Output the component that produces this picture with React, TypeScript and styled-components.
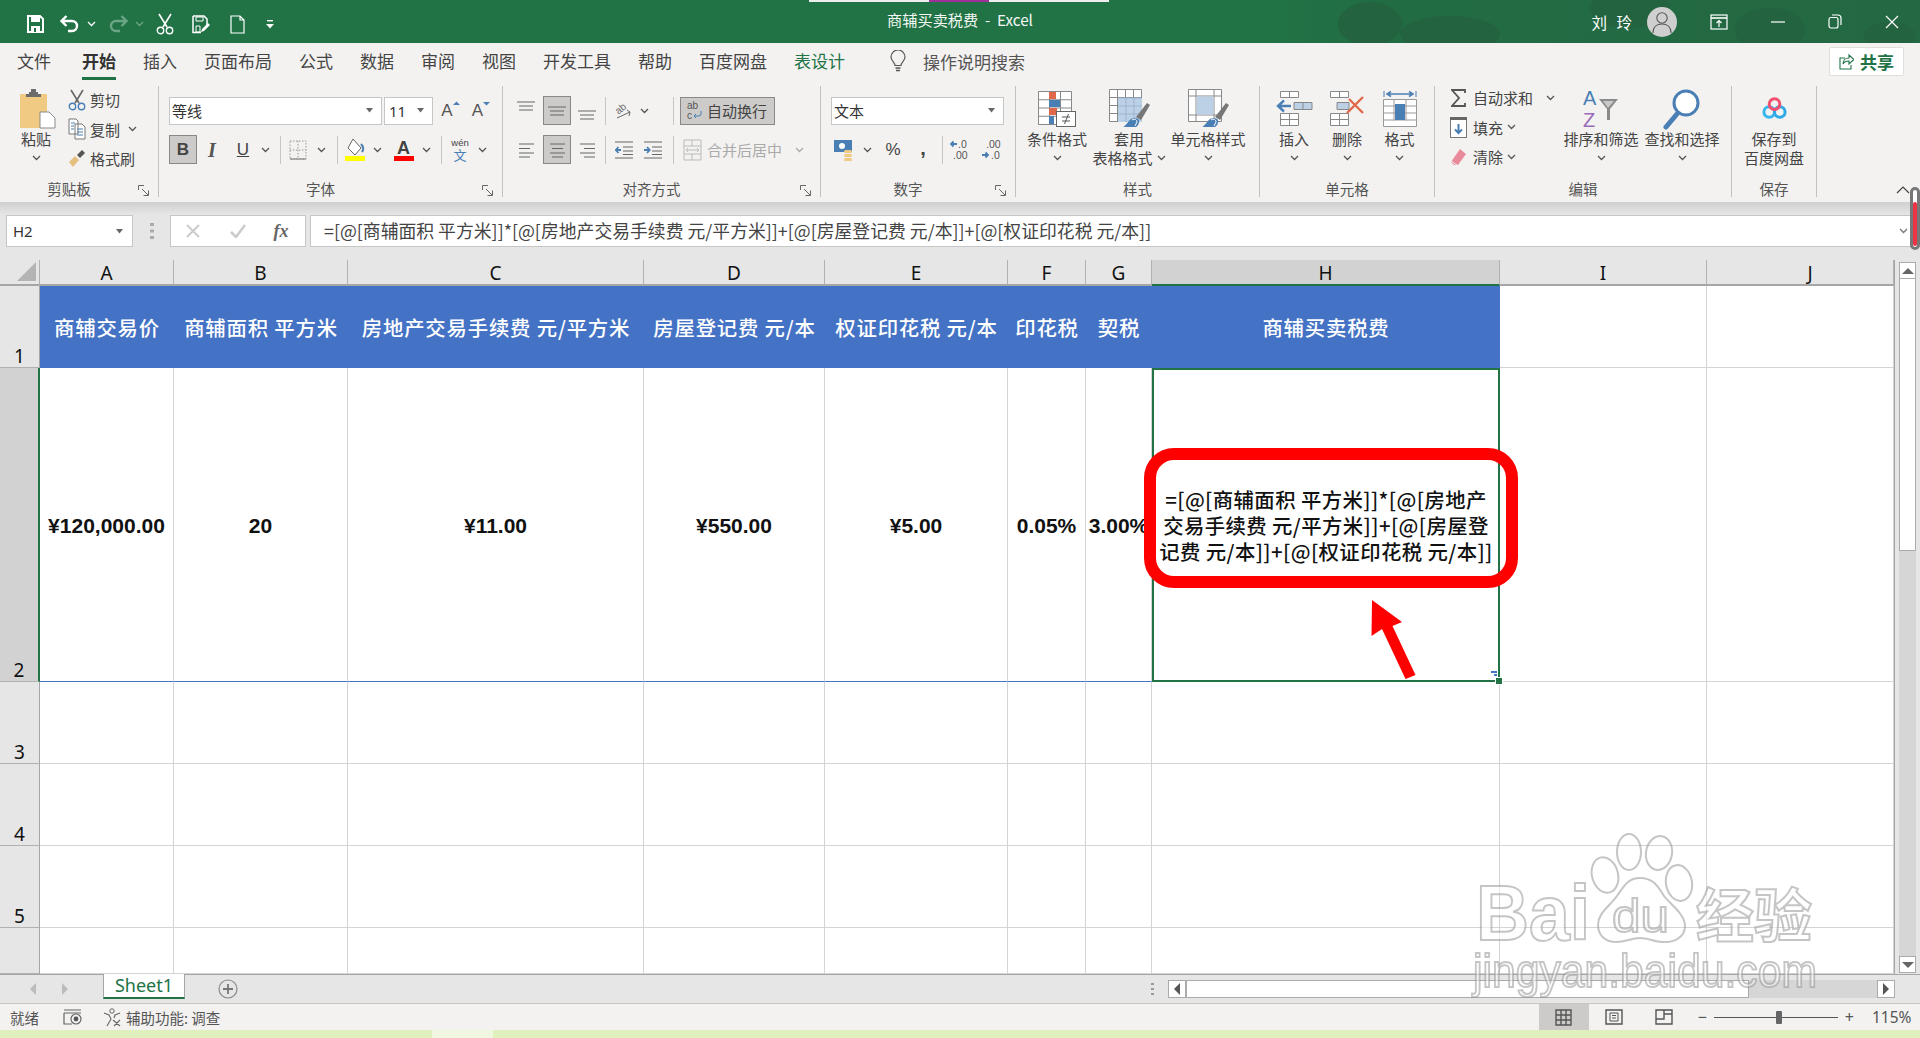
import React from 'react';
import styled, { createGlobalStyle } from 'styled-components';

const CJK = `'Noto Sans CJK SC', 'Noto Sans', sans-serif`;
const LATIN = `'Noto Sans', 'Noto Sans CJK SC', sans-serif`;

const GlobalStyle = createGlobalStyle`
    html, body {
        margin: 0;
        padding: 0;
        overflow: hidden;
        background: #e6e6e6;
    }
    * {
        box-sizing: border-box;
    }
    svg {
        display: block;
        flex: none;
    }
`;

const Page = styled.div`
    position: relative;
    width: 1920px;
    height: 1038px;
    overflow: hidden;
    display: flex;
    flex-direction: column;
    font-family: ${CJK};
    color: #444;
`;

/* ---------- title bar ---------- */

const TitleBar = styled.header`
    position: relative;
    flex: 0 0 43px;
    display: grid;
    grid-template-columns: 1fr auto 1fr;
    align-items: center;
    color: #fff;
    background: linear-gradient(90deg, #217346 0, #217346 66%, #226c44 72%, #236842 100%);
`;

const TopStripe = styled.div`
    position: absolute;
    top: 0;
    left: 809px;
    width: 300px;
    height: 2px;
    background: linear-gradient(90deg, #eee 0, #eee 40%, #a0309a 40%, #a0309a 60%, #eee 60%);
`;

const Leaves = styled.svg`
    position: absolute;
    top: 0;
    right: 0;
`;

const Qat = styled.div`
    position: relative;
    display: flex;
    align-items: center;
    padding: 5px 0 0 23px;
`;

const TitleText = styled.div`
    position: relative;
    font-size: 15.2px;
    line-height: 20px;
    margin-top: -6px;
    color: #f4f8f5;
    white-space: pre;
`;

const TitleRight = styled.div`
    position: relative;
    display: flex;
    align-items: center;
    justify-content: flex-end;
`;

const UserName = styled.span`
    font-size: 15.5px;
    letter-spacing: 3px;
    margin-right: 12px;
`;

const Avatar = styled.div`
    width: 30px;
    height: 30px;
    border-radius: 50%;
    background: #cfcfcf;
    display: flex;
    align-items: center;
    justify-content: center;
    margin-right: 34px;
`;

/* generic sized slot inside a toolbar row */
const Cell = styled.div<{ $w: number }>`
    flex: 0 0 ${(p) => p.$w}px;
    width: ${(p) => p.$w}px;
    min-width: 0;
    display: flex;
    align-items: center;
    justify-content: center;
`;

const WinBtn = styled(Cell)`
    height: 30px;
`;

/* ---------- ribbon ---------- */

const Ribbon = styled.section`
    flex: 0 0 159px;
    display: flex;
    flex-direction: column;
    background: #f3f2f1;
    position: relative;
`;

const TabRow = styled.nav`
    flex: 0 0 37px;
    display: flex;
    align-items: flex-start;
    gap: 27px;
    padding: 3px 0 0 17px;
`;

const Tab = styled.div<{ $active?: boolean; $green?: boolean }>`
    position: relative;
    height: 34px;
    font-size: 17px;
    line-height: 30px;
    font-weight: ${(p) => (p.$active ? 700 : 400)};
    color: ${(p) => (p.$active ? '#333' : p.$green ? '#217346' : '#444')};
    border-bottom: ${(p) => (p.$active ? '3px solid #217346' : '3px solid transparent')};
    margin-left: ${(p) => (p.$active ? '4px' : '0')};
`;

const Search = styled.div`
    display: flex;
    align-items: center;
    gap: 17px;
    height: 30px;
    margin-left: 18px;
    font-size: 17px;
    color: #555;
`;

const ShareBtn = styled.div`
    margin-left: auto;
    margin-right: 16px;
    margin-top: 1px;
    width: 75px;
    height: 29px;
    display: flex;
    align-items: center;
    justify-content: center;
    gap: 6px;
    background: #fff;
    border: 1px solid #e1dfdd;
    border-radius: 2px;
    color: #217346;
    font-size: 17px;
    font-weight: 700;
`;

const Groups = styled.div`
    display: flex;
    height: 111px;
    margin-top: 6px;
`;

const Group = styled.div<{ $w: number }>`
    flex: 0 0 ${(p) => p.$w}px;
    min-width: 0;
    display: flex;
    flex-direction: column;
    border-right: 1px solid #c4c2c0;
`;

const GroupBody = styled.div<{ $pad?: number }>`
    flex: 0 0 98px;
    display: flex;
    padding-left: ${(p) => p.$pad ?? 0}px;
`;

const Stack = styled.div`
    display: flex;
    flex-direction: column;
`;

const EditStack = styled(Stack)`
    margin-top: -3px;
`;

const ClipStack = styled(Stack)`
    margin-top: -1px;
`;

const ComboStack = styled(Stack)`
    padding-top: 10px;
    gap: 10px;
`;

const GroupFoot = styled.div`
    flex: 1;
    display: flex;
    align-items: center;
    font-size: 14.5px;
    line-height: 14px;
    color: #555;
`;

const FootLabel = styled.span`
    flex: 1;
    text-align: center;
    margin-top: -3px;
`;

const Launcher = styled.div`
    flex: 0 0 20px;
`;

const Collapse = styled.div`
    margin-left: auto;
    margin-right: 10px;
    align-self: flex-end;
    margin-bottom: 3px;
`;

const Row = styled.div`
    display: flex;
    align-items: center;
    height: 29px;
`;

const Combo = styled.div<{ $w: number }>`
    flex: 0 0 ${(p) => p.$w}px;
    height: 28px;
    display: flex;
    align-items: center;
    justify-content: space-between;
    padding: 0 7px 0 2px;
    background: #fff;
    border: 1px solid #c6c6c6;
    font-size: 15px;
    color: #333;
`;

const SizeValue = styled.span`
    padding-left: 2px;
    font-family: ${LATIN};
`;

const Toggle = styled.div<{ $w: number }>`
    flex: 0 0 ${(p) => p.$w}px;
    height: 29px;
    display: flex;
    align-items: center;
    justify-content: center;
    background: #cdcbc9;
    border: 1px solid #8a8886;
`;

const VSep = styled.div`
    flex: 0 0 1px;
    height: 28px;
    background: #c8c6c4;
`;

const Gap = styled.div<{ $w: number }>`
    flex: 0 0 ${(p) => p.$w}px;
`;

const FontMark = styled.span<{ $b?: boolean; $u?: boolean }>`
    font-family: 'Liberation Sans', sans-serif;
    font-size: 17px;
    line-height: 20px;
    color: #444;
    font-weight: ${(p) => (p.$b ? 700 : 400)};
    text-decoration: ${(p) => (p.$u ? 'underline' : 'none')};
`;

const ItalicMark = styled.span`
    font-family: 'Liberation Serif', serif;
    font-style: italic;
    font-weight: 700;
    font-size: 20px;
    line-height: 20px;
    color: #555;
`;

const CommaMark = styled.span`
    font-family: 'Liberation Sans', sans-serif;
    font-weight: 700;
    font-size: 20px;
    line-height: 12px;
    height: 16px;
    color: #444;
`;

const GrowWrap = styled.div`
    display: flex;
    align-items: flex-start;
`;

const GrowLetter = styled.span`
    font-family: 'Liberation Sans', sans-serif;
    font-size: 17px;
    line-height: 20px;
    color: #555;
`;

const WenWrap = styled.div`
    display: flex;
    flex-direction: column;
    align-items: center;
`;

const WenSmall = styled.span`
    font-family: 'Liberation Sans', sans-serif;
    font-size: 9.5px;
    line-height: 10px;
    color: #444;
`;

const WenBig = styled.span`
    font-size: 13px;
    line-height: 14px;
    color: #4a7fb5;
`;

const WrapBtn = styled.div`
    flex: 0 0 95px;
    height: 28px;
    display: flex;
    align-items: center;
    gap: 4px;
    padding-left: 5px;
    background: #cdcbc9;
    border: 1px solid #8a8886;
    font-size: 15px;
    color: #444;
    white-space: nowrap;
`;

const MergeBtn = styled.div`
    flex: 0 0 110px;
    height: 29px;
    display: flex;
    align-items: center;
    gap: 5px;
    padding-left: 3px;
    font-size: 15px;
    color: #aaa;
    white-space: nowrap;
`;

const Big = styled.div<{ $w: number }>`
    flex: 0 0 ${(p) => p.$w}px;
    min-width: 0;
    display: flex;
    flex-direction: column;
    align-items: center;
    font-size: 15px;
    line-height: 19px;
    color: #444;
    white-space: nowrap;
`;

const BigIcon = styled.div`
    height: 43px;
    padding-top: 2px;
    display: flex;
    align-items: center;
    justify-content: center;
`;

const ChevLine = styled.div`
    height: 19px;
    display: flex;
    align-items: center;
    justify-content: center;
    gap: 4px;
`;

const SmallRow = styled.div`
    height: 29.5px;
    display: flex;
    align-items: center;
    font-size: 15px;
    color: #444;
    white-space: nowrap;
`;

const SmallIcon = styled.div<{ $w: number; $pl?: number }>`
    flex: 0 0 ${(p) => p.$w}px;
    display: flex;
    justify-content: center;
    padding-left: ${(p) => p.$pl ?? 0}px;
`;

const SmallChev = styled.div<{ $ml: number }>`
    margin-left: ${(p) => p.$ml}px;
`;

/* ---------- formula bar ---------- */

const FormulaBar = styled.div`
    flex: 0 0 58px;
    display: flex;
    align-items: flex-start;
    padding: 13px 0 0 6px;
    background: linear-gradient(#cfcfcf 0, #e6e6e6 13px);
`;

const NameBox = styled.div`
    flex: 0 0 127px;
    height: 32px;
    display: flex;
    align-items: center;
    justify-content: space-between;
    padding: 0 8px 0 6px;
    background: #fff;
    border: 1px solid #c6c6c6;
    font-family: ${LATIN};
    font-size: 15px;
    color: #333;
`;

const Grip = styled.div`
    flex: 0 0 37px;
    height: 32px;
    display: flex;
    justify-content: center;
    align-items: center;
`;

const FxBox = styled.div`
    flex: 0 0 136px;
    height: 32px;
    display: flex;
    align-items: center;
    background: #fff;
    border: 1px solid #c6c6c6;
    margin-right: 4px;
`;

const Fx = styled.span`
    font-family: 'Liberation Serif', serif;
    font-style: italic;
    font-weight: 700;
    font-size: 18px;
    color: #666;
`;

const FormulaInput = styled.div`
    flex: 1;
    height: 32px;
    display: flex;
    align-items: center;
    justify-content: space-between;
    padding: 0 12px 0 13px;
    background: #fff;
    border: 1px solid #c6c6c6;
    border-right: 0;
    font-size: 17.84px;
    line-height: 26px;
    color: #444;
    white-space: pre;
`;

const FormulaText = styled.span`
    margin-top: -2px;
`;

/* ---------- sheet ---------- */

const SheetArea = styled.main`
    flex: 0 0 714px;
    display: flex;
    background: #e6e6e6;
`;

const Grid = styled.div`
    flex: 0 0 1894px;
    display: grid;
    grid-template-columns: 40px 134px 174px 296px 181px 183px 78px 66px 348px 207px 187px;
    grid-template-rows: 26px 82px 314px 82px 82px 82px 46px;
    background: #fff;
    border-right: 1px solid #a6a6a6;
    position: relative;
`;

const Corner = styled.div`
    background: #e6e6e6;
    border-right: 1px solid #b1b1b1;
    border-bottom: 2px solid #a6a6a6;
    display: flex;
    align-items: flex-end;
    justify-content: flex-end;
    padding: 0 3px 3px 0;
`;

const ColHead = styled.div<{ $on?: boolean; $shift?: number }>`
    display: flex;
    align-items: center;
    justify-content: center;
    padding-left: ${(p) => p.$shift ?? 0}px;
    padding-top: 2px;
    background: ${(p) => (p.$on ? '#d2d2d2' : '#e6e6e6')};
    border-right: 1px solid #b1b1b1;
    border-bottom: 2px solid ${(p) => (p.$on ? '#217346' : '#a6a6a6')};
    font-family: ${LATIN};
    font-size: 19px;
    line-height: 22px;
    color: #111;
`;

const RowHead = styled.div<{ $on?: boolean }>`
    display: flex;
    align-items: flex-end;
    justify-content: center;
    background: ${(p) => (p.$on ? '#d2d2d2' : '#e6e6e6')};
    border-right: ${(p) => (p.$on ? '2px solid #217346' : '1px solid #a6a6a6')};
    border-bottom: 1px solid #b1b1b1;
    font-family: ${LATIN};
    font-size: 19px;
    line-height: 22.5px;
    color: #111;
`;

const HeadCell = styled.div`
    display: flex;
    align-items: center;
    justify-content: center;
    background: #4472c4;
    color: #fff;
    font-size: 20.4px;
    line-height: 26px;
    font-weight: 500;
    white-space: nowrap;
    letter-spacing: 0.8px;
`;

const DataCell = styled.div`
    display: flex;
    align-items: center;
    justify-content: center;
    padding-top: 2px;
    border-right: 1px solid #d4d4d4;
    border-bottom: 1px solid #4472c4;
    font-family: 'Liberation Sans', sans-serif;
    font-size: 21px;
    font-weight: 700;
    color: #111;
    white-space: nowrap;
    overflow: hidden;
`;

const SelectedCell = styled.div`
    position: relative;
    display: flex;
    flex-direction: column;
    align-items: center;
    justify-content: center;
    border: 2px solid #217346;
    font-size: 20.4px;
    letter-spacing: 0.4px;
    line-height: 26px;
    font-weight: 500;
    color: #111;
    white-space: nowrap;
`;

const FillHandle = styled.div`
    position: absolute;
    right: -4px;
    bottom: -4px;
    width: 6px;
    height: 6px;
    background: #217346;
    outline: 1px solid #fff;
`;

const Blank = styled.div`
    border-right: 1px solid #d4d4d4;
    border-bottom: 1px solid #d4d4d4;
`;

const VScroll = styled.div`
    flex: 1;
    display: flex;
    flex-direction: column;
    padding: 2px 4px 1px 4px;
`;

const ScrollBtn = styled.div`
    flex: 0 0 17px;
    display: flex;
    align-items: center;
    justify-content: center;
    background: #fff;
    border: 1px solid #ababab;
`;

const VThumb = styled.div`
    flex: 0 0 272px;
    background: #fff;
    border: 1px solid #ababab;
    border-top: 0;
`;

const VLane = styled.div`
    flex: 1;
    background: #d6d6d6;
`;

/* ---------- sheet tabs ---------- */

const TabBar = styled.div`
    flex: 0 0 29px;
    display: flex;
    align-items: flex-start;
    background: #e6e6e6;
    border-top: 1px solid #a6a6a6;
`;

const NavArrows = styled.div`
    flex: 0 0 103px;
    height: 28px;
    display: flex;
    align-items: center;
    padding-left: 27px;
    gap: 20px;
`;

const SheetTab = styled.div`
    flex: 0 0 82px;
    height: 25px;
    margin-top: -1px;
    background: #fff;
    border-left: 1px solid #a6a6a6;
    border-right: 1px solid #a6a6a6;
    border-bottom: 2px solid #217346;
    color: #217346;
    font-family: ${LATIN};
    font-size: 18px;
    line-height: 22px;
    text-align: center;
`;

const AddSheet = styled.div`
    margin: 4px 0 0 33px;
    width: 20px;
    height: 20px;
`;

const HScroll = styled.div`
    margin-left: auto;
    display: flex;
    align-items: center;
    height: 28px;
    padding-right: 25px;
`;

const Dots = styled.div`
    flex: 0 0 17px;
`;

const HBtn = styled.div`
    flex: 0 0 18px;
    height: 18px;
    display: flex;
    align-items: center;
    justify-content: center;
    background: #fff;
    border: 1px solid #ababab;
`;

const HThumb = styled.div`
    flex: 0 0 563px;
    height: 18px;
    background: #fff;
    border: 1px solid #ababab;
`;

const HLane = styled.div`
    flex: 0 0 128px;
    height: 18px;
    background: #d6d6d6;
`;

/* ---------- status bar ---------- */

const StatusBar = styled.footer`
    flex: 0 0 27px;
    display: flex;
    align-items: center;
    padding-left: 10px;
    background: #f3f2f1;
    border-top: 1px solid #c8c6c4;
    font-size: 14.5px;
    color: #555;
    white-space: nowrap;
`;

const StatusText = styled.span`
    margin-right: 4px;
`;

const StatusRight = styled.div`
    margin-left: auto;
    display: flex;
    align-items: center;
    height: 100%;
`;

const ViewBtn = styled.div<{ $on?: boolean }>`
    flex: 0 0 50px;
    height: 100%;
    display: flex;
    align-items: center;
    justify-content: center;
    background: ${(p) => (p.$on ? '#cdcbc9' : 'transparent')};
`;

const ZoomTrack = styled.div`
    position: relative;
    flex: 0 0 124px;
    height: 1px;
    margin: 0 7px;
    background: #555;
`;

const ZoomThumb = styled.div`
    position: absolute;
    left: 62px;
    top: -6px;
    width: 6px;
    height: 13px;
    background: #666;
    border-radius: 1px;
`;

const ZoomValue = styled.span`
    flex: 0 0 49px;
    padding-left: 1px;
    font-family: ${LATIN};
    font-size: 15.5px;
    color: #555;
`;

const PlusMinus = styled.span`
    font-family: ${LATIN};
    font-size: 16px;
    line-height: 16px;
    color: #555;
`;

const GreenStrip = styled.div`
    flex: 1;
    display: flex;
    background: #dff0bd;
`;

const StripPatch = styled.div`
    flex: 0 0 61px;
    margin-left: 432px;
    background: #eff7e0;
`;

/* ---------- things lying over the page ---------- */

const RedFrame = styled.div`
    position: absolute;
    left: 1144px;
    top: 448px;
    width: 374px;
    height: 140px;
    border: 12px solid #ff0000;
    border-radius: 30px;
`;

const Overlay = styled.svg`
    position: absolute;
    left: 0;
    top: 0;
    pointer-events: none;
`;

const Thermo = styled.div`
    position: absolute;
    left: 1910px;
    top: 187px;
    width: 10px;
    height: 63px;
    border: 3px solid #777;
    border-radius: 6px;
    background: #fff;
    display: flex;
    align-items: flex-end;
    justify-content: center;
    padding-bottom: 1px;
`;

const ThermoFill = styled.div`
    width: 4px;
    height: 44px;
    background: #ee3344;
    border-radius: 2px;
`;

/* ---------- icons ---------- */

const Chev = ({ c = '#555' }: { c?: string }) => (
    <svg width="9" height="6" viewBox="0 0 9 6">
        <path d="M1 1l3.5 3.5L8 1" fill="none" stroke={c} strokeWidth="1.3" />
    </svg>
);

const ChevUp = () => (
    <svg width="14" height="9" viewBox="0 0 14 9">
        <path d="M1 8l6-6 6 6" fill="none" stroke="#444" strokeWidth="1.2" />
    </svg>
);

const Drop = () => (
    <svg width="9" height="5" viewBox="0 0 9 5">
        <path d="M1 0h7L4.5 4.5z" fill="#666" />
    </svg>
);

const QSave = () => (
    <svg width="17" height="18" viewBox="0 0 17 18">
        <path d="M1 1h12l3 3v13H1z" fill="none" stroke="#fff" strokeWidth="2" />
        <rect x="4" y="2" width="9" height="5" fill="#fff" />
        <rect x="4" y="11" width="9" height="6" fill="#fff" />
        <rect x="7" y="13" width="2" height="4" fill="#217346" />
    </svg>
);

const QUndo = ({ c = '#fff' }: { c?: string }) => (
    <svg width="19" height="18" viewBox="0 0 19 18">
        <path d="M2 6h10a4.5 4.5 0 0 1 0 10H8M6.5 1L1.5 6l5 5" fill="none" stroke={c} strokeWidth="2.4" />
    </svg>
);

const QRedo = ({ c = '#6aa585' }: { c?: string }) => (
    <svg width="19" height="18" viewBox="0 0 19 18">
        <path d="M17 6H7a4.5 4.5 0 0 0 0 10h4M12.5 1l5 5-5 5" fill="none" stroke={c} strokeWidth="2.4" />
    </svg>
);

const Scissors = ({ c = '#fff', h = '#fff' }: { c?: string; h?: string }) => (
    <svg width="18" height="22" viewBox="0 0 18 22">
        <path d="M3 1l8 13M15 1L7 14" fill="none" stroke={c} strokeWidth="1.6" />
        <circle cx="4.5" cy="17.5" r="3.2" fill="none" stroke={h} strokeWidth="1.4" />
        <circle cx="13.5" cy="17.5" r="3.2" fill="none" stroke={h} strokeWidth="1.4" />
    </svg>
);

const QSaveEdit = () => (
    <svg width="18" height="19" viewBox="0 0 18 19">
        <path d="M1 1h11l3 3v6M9 17.5H1V1" fill="none" stroke="#fff" strokeWidth="1.5" />
        <path d="M4 2h7v4H4zM4 11h4v6H4z" fill="none" stroke="#fff" />
        <path d="M9 17l1-3 6-6 2 2-6 6z" fill="#fff" />
    </svg>
);

const QDoc = () => (
    <svg width="15" height="19" viewBox="0 0 15 19">
        <path d="M1 1h9l4 4v13H1z M10 1v4h4" fill="none" stroke="#fff" strokeWidth="1.2" />
    </svg>
);

const QCustom = () => (
    <svg width="8" height="9" viewBox="0 0 8 9">
        <rect x="1" y="0" width="6" height="1.4" fill="#fff" />
        <path d="M0 4h8L4 8.5z" fill="#fff" />
    </svg>
);

const Person = () => (
    <svg width="22" height="24" viewBox="0 0 22 24">
        <circle cx="11" cy="8" r="5.2" fill="none" stroke="#555" strokeWidth="1.1" />
        <path d="M2 23c0-6 4-9 9-9s9 3 9 9" fill="none" stroke="#555" strokeWidth="1.1" />
    </svg>
);

const RibbonDisplay = () => (
    <svg width="18" height="16" viewBox="0 0 18 16">
        <rect x="1" y="1" width="16" height="14" fill="none" stroke="#fff" strokeWidth="1.2" />
        <path d="M1 4h16" stroke="#fff" strokeWidth="1.6" />
        <path d="M9 13V7M6.5 9L9 6.5 11.5 9" fill="none" stroke="#fff" strokeWidth="1.2" />
    </svg>
);

const WinMin = () => (
    <svg width="14" height="2" viewBox="0 0 14 2">
        <path d="M0 1h14" stroke="#fff" strokeWidth="1.2" />
    </svg>
);

const WinRestore = () => (
    <svg width="14" height="15" viewBox="0 0 14 15">
        <rect x="1" y="3.5" width="9" height="10.5" rx="2" fill="none" stroke="#fff" strokeWidth="1.2" />
        <path d="M4 1h6a3 3 0 0 1 3 3v7" fill="none" stroke="#fff" strokeWidth="1.2" />
    </svg>
);

const WinClose = () => (
    <svg width="14" height="14" viewBox="0 0 14 14">
        <path d="M1 1l12 12M13 1L1 13" stroke="#fff" strokeWidth="1.2" />
    </svg>
);

const Bulb = () => (
    <svg width="16" height="23" viewBox="0 0 16 23">
        <path d="M5 15.5c0-3-4-4.5-4-8.5a7 7 0 0 1 14 0c0 4-4 5.5-4 8.5z" fill="none" stroke="#555" strokeWidth="1.2" />
        <path d="M5.5 18h5M6 20.5h4" stroke="#555" strokeWidth="1.6" />
    </svg>
);

const ShareIcon = () => (
    <svg width="15" height="17" viewBox="0 0 15 17">
        <path d="M6 5H1v11h11v-4" fill="none" stroke="#217346" strokeWidth="1.1" />
        <path d="M4 11c0-4 3-6 6-6V2l5 4.5L10 11V8c-3 0-5 1-6 3z" fill="none" stroke="#217346" strokeWidth="1.1" />
    </svg>
);

const Paste = () => (
    <svg width="40" height="40" viewBox="-4 0 40 40">
        <rect x="0" y="5" width="27" height="34" rx="1" fill="#f0c983" />
        <path d="M9 5V3h2V0h5v3h2v2h3v3H6V5z" fill="#6b6b6b" />
        <path d="M20 23h9l6 6v10H20z" fill="#fff" stroke="#8a8a8a" />
    </svg>
);

const Copy = () => (
    <svg width="18" height="22" viewBox="0 0 18 22">
        <path d="M1 1h7l2 2v13H1zM7 6h7l3 3v12H7z" fill="#fff" stroke="#777" />
        <path d="M3 5h4M3 8h3M3 11h3M9 11h6M9 14h6M9 17h6" stroke="#4a7fb5" />
    </svg>
);

const Painter = () => (
    <svg width="18" height="19" viewBox="0 0 18 19">
        <path d="M1 13l6-6 4 4-6 7z" fill="#e5bf80" />
        <path d="M9 6l5-5 3 3-5 5z" fill="#555" />
    </svg>
);

const Launch = () => (
    <svg width="11" height="11" viewBox="0 0 11 11">
        <path d="M.5 5V.5H6M4 4l6 6M10.5 5.5v5h-5" fill="none" stroke="#666" />
    </svg>
);

const GrowA = ({ up }: { up?: boolean }) => (
    <GrowWrap>
        <GrowLetter>A</GrowLetter>
        <svg width="7" height="5" viewBox="0 0 7 5">
            <path d={up ? 'M0 4l3.5-3.5L7 4z' : 'M0 1l3.5 3.5L7 1z'} fill="#4a7fb5" />
        </svg>
    </GrowWrap>
);

const Borders = () => (
    <svg width="18" height="20" viewBox="0 0 18 20">
        <path d="M1 1h16v18H1zM1 10h16M9 1v18" fill="none" stroke="#999" strokeDasharray="1.5 1.5" />
        <path d="M1 19h16" stroke="#777" />
    </svg>
);

const FillColor = () => (
    <svg width="22" height="24" viewBox="0 0 22 24">
        <path d="M9 1l8 9-6 7-7-7z" fill="#fff" stroke="#666" />
        <path d="M17 6c2 2 3 5 1 8" fill="none" stroke="#4a7fb5" strokeWidth="2" />
        <rect x="1" y="18" width="20" height="5" fill="#ffff00" />
    </svg>
);

const TextColor = () => (
    <svg width="20" height="24" viewBox="0 0 20 24">
        <text x="3" y="16" fontFamily="Liberation Sans" fontWeight="700" fontSize="18" fill="#444">A</text>
        <rect x="0" y="18" width="20" height="5" fill="#ff0000" />
    </svg>
);

const Wen = () => (
    <WenWrap>
        <WenSmall>wén</WenSmall>
        <WenBig>文</WenBig>
    </WenWrap>
);

/* top, middle or bottom stack of lines, and left, centre or right lines */
const VAlignIcon = ({ y }: { y: number }) => (
    <svg width="18" height="20" viewBox="0 0 18 20">
        <path d={`M0 ${y}h18M2 ${y + 4}h14M2 ${y + 8}h14`} stroke="#666" strokeWidth="1" fill="none" />
    </svg>
);

const HAlignIcon = ({ a }: { a: 'l' | 'c' | 'r' }) => {
    const long = 'M0 3h15M0 12h15';
    const short = a === 'l' ? 'M0 7.5h11M0 16h11' : a === 'c' ? 'M2 7.5h11M2 16h11' : 'M4 7.5h11M4 16h11';
    return (
        <svg width="15" height="18" viewBox="0 0 15 18">
            <path d={`${long}${short}`} stroke="#666" strokeWidth="1" fill="none" />
        </svg>
    );
};

const Orient = () => (
    <svg width="20" height="20" viewBox="0 0 20 20">
        <text x="3" y="11" fontFamily="Liberation Sans" fontSize="10" fill="#666" transform="rotate(-40 8 9)">ab</text>
        <path d="M4 17l13-6M14 9l3 2-1 4" fill="none" stroke="#666" />
    </svg>
);

const Indent = ({ out }: { out?: boolean }) => (
    <svg width="18" height="18" viewBox="0 0 18 18">
        <path d="M0 1h18M8 6h10M8 10h10M8 13.5h10M0 17h18" stroke="#666" />
        <path d={out ? 'M6 9H1M3.5 6L.8 9l2.7 3' : 'M0 9h5.5M3 6l2.7 3L3 12'} stroke="#4a7fb5" strokeWidth="1.8" fill="none" />
    </svg>
);

const WrapIcon = () => (
    <svg width="17" height="21" viewBox="0 0 17 21">
        <text x="1" y="9" fontFamily="Liberation Sans" fontSize="10" fill="#555">ab</text>
        <text x="1" y="19" fontFamily="Liberation Sans" fontSize="10" fill="#555">c</text>
        <path d="M15 11v3a2 2 0 0 1-2 2H8M10 14l-2 2 2 2" fill="none" stroke="#4a7fb5" />
    </svg>
);

const MergeIcon = () => (
    <svg width="19" height="22" viewBox="0 0 19 22">
        <path d="M1 1h17v20H1zM1 7h17M1 15h17M9 1v6M9 15v6" fill="none" stroke="#bbb" />
        <path d="M3 11h13M5 9l-2 2 2 2M14 9l2 2-2 2" fill="none" stroke="#bbb" />
    </svg>
);

const Accounting = () => (
    <svg width="20" height="22" viewBox="0 0 20 22">
        <rect x="0" y="1" width="18" height="12" fill="#4a7fb5" />
        <circle cx="8" cy="7" r="3" fill="#fff" />
        <rect x="10" y="11" width="8" height="3" rx="1.5" fill="#f0c983" />
        <rect x="10" y="15" width="8" height="3" rx="1.5" fill="#f0c983" />
        <rect x="10" y="19" width="8" height="3" rx="1.5" fill="#f0c983" />
    </svg>
);

const Decimal = ({ more }: { more?: boolean }) => (
    <svg width="22" height="22" viewBox="0 0 22 22">
        <text x={more ? 6 : 8} y="9" fontFamily="Liberation Sans" fontSize="10.5" fill="#555">{more ? '.00' : '.0'}</text>
        <text x={more ? 11 : 3} y="20" fontFamily="Liberation Sans" fontSize="10.5" fill="#555">{more ? '.0' : '.00'}</text>
        {more ? (
            <path d="M2 16h6M5.5 13.5L8 16l-2.5 2.5" fill="none" stroke="#4a7fb5" strokeWidth="1.8" />
        ) : (
            <path d="M1 5h6M3.5 2.5L1 5l2.5 2.5" fill="none" stroke="#4a7fb5" strokeWidth="1.8" />
        )}
    </svg>
);

const gridLines = (x: number, y: number, w: number, h: number, cols: number, rows: number) => {
    let d = `M${x} ${y}h${w}v${h}h${-w}z`;
    for (let i = 1; i < cols; i++) d += `M${x + (w * i) / cols} ${y}v${h}`;
    for (let i = 1; i < rows; i++) d += `M${x} ${y + (h * i) / rows}h${w}`;
    return d;
};

const CondFormat = () => (
    <svg width="38" height="38" viewBox="0 0 38 38">
        <path d={gridLines(0.5, 1.5, 33, 33, 3, 4)} fill="#fff" stroke="#888" />
        <rect x="11" y="2" width="7" height="7" fill="#e0674a" />
        <rect x="11" y="10" width="11" height="7" fill="#4a7fb5" />
        <rect x="11" y="18" width="8" height="7" fill="#e0674a" />
        <rect x="11" y="26" width="5" height="8" fill="#4a7fb5" />
        <rect x="18.5" y="21.5" width="19" height="15" fill="#fff" stroke="#666" />
        <path d="M24 27h8M24 31h8M30.5 24l-4 10" stroke="#555" fill="none" />
    </svg>
);

const Brush = () => (
    <>
        <path d="M27 28l11-14 3 2-9 15z" fill="#777" />
        <path d="M14 38c3-1 5-6 8-8 3-2 7-1 8 1 1 3-2 7-3 7z" fill="#4a7fb5" />
        <path d="M23 31c3-2 5 0 5 2l-2 4" fill="none" stroke="#fff" />
    </>
);

const TableFormat = () => (
    <svg width="41" height="40" viewBox="0 0 41 40">
        <path d={gridLines(0.5, 0.5, 32, 32, 4, 4)} fill="#fff" stroke="#888" />
        <rect x="9" y="9" width="24" height="24" fill="#bcd0e6" />
        <path d="M9 9h24M17 9v24M25 9v24M9 17h24M9 25h24" stroke="#9db7d2" />
        <Brush />
    </svg>
);

const CellStyle = () => (
    <svg width="41" height="40" viewBox="0 0 41 40">
        <path d="M.5.5h33v32H.5zM.5 7h33M.5 26h33M8 .5v32M26 .5v32" fill="#fff" stroke="#888" />
        <rect x="8.5" y="7.5" width="17" height="18" fill="#bcd0e6" />
        <Brush />
    </svg>
);

const InsertIcon = () => (
    <svg width="37" height="35" viewBox="0 0 37 35">
        <path d="M4.5.5h18v6h-18zM13.5.5v6M4.5 22.5h18v12h-18zM4.5 28.5h18M13.5 22.5v12" fill="#fff" stroke="#888" />
        <path d="M18 11.5h18v7H18z" fill="#bcd0e6" stroke="#888" />
        <path d="M27 11.5v7" stroke="#888" />
        <path d="M15 15H3M8 9.5L2 15l6 5.5" fill="none" stroke="#4a7fb5" strokeWidth="2.4" />
    </svg>
);

const DeleteIcon = () => (
    <svg width="36" height="35" viewBox="0 0 36 35">
        <path d="M1.5.5h18v6h-18zM10.5.5v6M1.5 22.5h18v12h-18zM1.5 28.5h18M10.5 22.5v12" fill="#fff" stroke="#888" />
        <path d="M8 11.5h12v7H8z" fill="#bcd0e6" stroke="#888" />
        <path d="M20 8l14 14M34 6L18 22" stroke="#e0674a" strokeWidth="2.4" />
    </svg>
);

const FormatIcon = () => (
    <svg width="34" height="38" viewBox="0 0 34 38">
        <path d="M1 1v6M33 1v6" stroke="#4a7fb5" />
        <path d="M4 4h26M8 1.5L4 4l4 2.5M26 1.5L30 4l-4 2.500" fill="none" stroke="#4a7fb5" strokeWidth="1.5" />
        <path d="M.5 9.5h33v27H.5zM.5 30h33M11 9.5v21M23 9.5v21M.5 16h33M.5 23h33" fill="#fff" stroke="#999" />
        <rect x="12" y="14" width="10" height="16" fill="#4a7fb5" />
    </svg>
);

const Sigma = () => (
    <svg width="15" height="18" viewBox="0 0 15 18">
        <path d="M14 4V1H1l7 8-7 8h13v-3" fill="none" stroke="#555" strokeWidth="1.8" />
    </svg>
);

const FillDown = () => (
    <svg width="17" height="21" viewBox="0 0 17 21">
        <rect x=".5" y=".5" width="16" height="20" fill="#fff" stroke="#777" />
        <rect x="0" y="0" width="17" height="3" fill="#666" />
        <path d="M8.5 7v9M5 12.5l3.5 3.5 3.5-3.5" fill="none" stroke="#4a7fb5" strokeWidth="2" />
    </svg>
);

const Eraser = () => (
    <svg width="17" height="18" viewBox="0 0 17 18">
        <path d="M10 1l6 5-8 11H4l-3-3z" fill="#e88a9a" />
        <path d="M1 13l6 4" stroke="#f3f2f1" />
    </svg>
);

const SortFilter = () => (
    <svg width="38" height="42" viewBox="0 0 38 42">
        <text x="1" y="17" fontFamily="Liberation Sans" fontSize="20" fill="#4a7fb5">A</text>
        <text x="1" y="39" fontFamily="Liberation Sans" fontSize="20" fill="#9a6bb8">Z</text>
        <path d="M17 11h19l-8 10v11h-3V21z" fill="#8a8a8a" />
        <path d="M21 13h11l-6 7z" fill="#c8c8c8" />
    </svg>
);

const Magnifier = () => (
    <svg width="38" height="42" viewBox="0 0 38 42">
        <circle cx="23" cy="15" r="12" fill="#fff" stroke="#4a7fb5" strokeWidth="3" />
        <path d="M14 26L3 39" stroke="#4a7fb5" strokeWidth="5" strokeLinecap="round" />
    </svg>
);

const BaiduCloud = () => (
    <svg width="25" height="23" viewBox="0 0 28 26">
        <circle cx="8" cy="17" r="6" fill="none" stroke="#38b6ef" strokeWidth="3.4" />
        <circle cx="20" cy="17" r="6" fill="none" stroke="#2da9e6" strokeWidth="3.4" />
        <circle cx="14" cy="8" r="6" fill="none" stroke="#f0506e" strokeWidth="3.4" />
    </svg>
);

const CheckMark = () => (
    <svg width="16" height="14" viewBox="0 0 16 14">
        <path d="M1 8l5 5 9-12" fill="none" stroke="#ccc" strokeWidth="2.6" />
    </svg>
);

const XMark = () => (
    <svg width="14" height="14" viewBox="0 0 14 14">
        <path d="M1 1l12 12M13 1L1 13" stroke="#ccc" strokeWidth="2" />
    </svg>
);

const GripDots = () => (
    <svg width="4" height="16" viewBox="0 0 4 16">
        <path d="M0 0h4v3H0zM0 6.5h4v3H0zM0 13h4v3H0z" fill="#aaa" />
    </svg>
);

const CornerMark = () => (
    <svg width="19" height="19" viewBox="0 0 19 19">
        <path d="M19 0v19H0z" fill="#b4b4b4" />
    </svg>
);

const Tri = ({ d, c = '#666' }: { d: 'u' | 'd' | 'l' | 'r'; c?: string }) => {
    const path = { u: 'M0 7L6 1l6 6z', d: 'M0 1h12L6 7z', l: 'M7 0v12L1 6z', r: 'M1 0v12l6-6z' }[d];
    return (
        <svg width="12" height="12" viewBox={d === 'u' || d === 'd' ? '0 -2 12 12' : '-2 0 12 12'}>
            <path d={path} fill={c} />
        </svg>
    );
};

const PlusCircle = () => (
    <svg width="20" height="20" viewBox="0 0 20 20">
        <circle cx="10" cy="10" r="9" fill="none" stroke="#8a8a8a" strokeWidth="1.2" />
        <path d="M5 10h10M10 5v10" stroke="#777" strokeWidth="1.8" />
    </svg>
);

const HDots = () => (
    <svg width="3" height="12" viewBox="0 0 3 12">
        <path d="M0 0h3v2H0zM0 5h3v2H0zM0 10h3v2H0z" fill="#999" />
    </svg>
);

const MacroIcon = () => (
    <svg width="19" height="16" viewBox="0 0 19 16">
        <path d="M1 1h17M1 4h17M1 4v11h8" fill="none" stroke="#666" strokeWidth="1.2" />
        <circle cx="13" cy="10" r="5" fill="none" stroke="#666" strokeWidth="1.2" />
        <circle cx="13" cy="10" r="2.4" fill="#555" />
    </svg>
);

const Access = () => (
    <svg width="19" height="19" viewBox="0 0 19 19">
        <circle cx="9" cy="3" r="2.2" fill="none" stroke="#666" />
        <path d="M1 5l5 2 2 4-4 7M17 5l-5 2-1 3M10 12l7 6M17 12l-6 6" fill="none" stroke="#666" strokeWidth="1.1" />
    </svg>
);

const NormalView = () => (
    <svg width="17" height="17" viewBox="0 0 17 17">
        <path d={gridLines(1, 1, 15, 15, 3, 3)} fill="none" stroke="#555" strokeWidth="1.4" />
    </svg>
);

const PageView = () => (
    <svg width="18" height="16" viewBox="0 0 18 16">
        <path d="M1 1h16v14H1z" fill="none" stroke="#555" strokeWidth="1.4" />
        <path d="M5 4h8v8H5zM7 6.5h4M7 9h4" fill="none" stroke="#555" />
    </svg>
);

const BreakView = () => (
    <svg width="18" height="16" viewBox="0 0 18 16">
        <path d="M1 1h16v14H1zM1 10h8V1M9 5h8" fill="none" stroke="#555" strokeWidth="1.4" />
    </svg>
);

/* ---------- data ---------- */

const columns = ['A', 'B', 'C', 'D', 'E', 'F', 'G', 'H', 'I', 'J'];
const headers = ['商辅交易价', '商辅面积 平方米', '房地产交易手续费 元/平方米', '房屋登记费 元/本', '权证印花税 元/本', '印花税', '契税', '商辅买卖税费'];
const values = ['¥120,000.00', '20', '¥11.00', '¥550.00', '¥5.00', '0.05%', '3.00%'];
const tabs = ['插入', '页面布局', '公式', '数据', '审阅', '视图', '开发工具', '帮助', '百度网盘'];
const formula = '=[@[商辅面积 平方米]]*[@[房地产交易手续费 元/平方米]]+[@[房屋登记费 元/本]]+[@[权证印花税 元/本]]';
const wrapped = ['=[@[商辅面积 平方米]]*[@[房地产', '交易手续费 元/平方米]]+[@[房屋登', '记费 元/本]]+[@[权证印花税 元/本]]'];

const Foot = ({ label, launch }: { label: string; launch?: boolean }) => (
    <GroupFoot>
        <FootLabel>{label}</FootLabel>
        {launch && (
            <Launcher>
                <Launch />
            </Launcher>
        )}
    </GroupFoot>
);

const BigButton = ({ w, icon, lines, chev = 'below' }: { w: number; icon: React.ReactNode; lines: string[]; chev?: 'below' | 'inline' | 'none' }) => (
    <Big $w={w}>
        <BigIcon>{icon}</BigIcon>
        {lines.map((line, i) =>
            chev === 'inline' && i === lines.length - 1 ? (
                <ChevLine key={line}>
                    {line}
                    <Chev />
                </ChevLine>
            ) : (
                <div key={line}>{line}</div>
            ),
        )}
        {chev === 'below' && (
            <ChevLine>
                <Chev />
            </ChevLine>
        )}
    </Big>
);

const Watermark = () => {
    const stroke = 'rgba(150,150,150,0.55)';
    return (
        <Overlay width="1920" height="1038" viewBox="0 0 1920 1038">
            <defs>
                <filter id="soft">
                    <feGaussianBlur stdDeviation="0.7" />
                </filter>
            </defs>
            <g fill="none" stroke={stroke} strokeWidth="2" filter="url(#soft)">
                <ellipse cx="1605" cy="875" rx="13" ry="18" transform="rotate(-15 1605 875)" />
                <ellipse cx="1629" cy="852" rx="12" ry="18" />
                <ellipse cx="1659" cy="853" rx="13" ry="17" transform="rotate(10 1659 853)" />
                <ellipse cx="1679" cy="883" rx="13" ry="18" transform="rotate(-10 1679 883)" />
                <path d="M1640 878c13 0 18 8 24 18 6 8 21 18 21 30 0 11-11 17-22 16-8 0-15-4-23-4-9 0-14 4-24 4-11 0-18-7-18-17 0-12 11-18 19-29 7-10 11-18 23-18z" />
            </g>
            <g fontWeight="700" fill="rgba(255,255,255,0.5)" stroke={stroke} strokeWidth="2" filter="url(#soft)">
                <text x="1476" y="940" fontFamily="Liberation Sans" fontSize="78" textLength="114" lengthAdjust="spacingAndGlyphs">Bai</text>
                <text x="1612" y="932" fontFamily="Liberation Sans" fontSize="46" textLength="57" lengthAdjust="spacingAndGlyphs" fontWeight="400">du</text>
                <text x="1696" y="937" fontFamily="Noto Sans CJK SC" fontSize="58" textLength="116" lengthAdjust="spacingAndGlyphs">经验</text>
                <text x="1473" y="987" fontFamily="Liberation Sans" fontSize="47" fontWeight="400" textLength="344" lengthAdjust="spacingAndGlyphs">jingyan.baidu.com</text>
            </g>
        </Overlay>
    );
};

const Arrow = () => (
    <Overlay width="1920" height="1038" viewBox="0 0 1920 1038">
        <path d="M1372 600l30 22-9.5 4 23 49-10 4-23.5-50-10.5 7z" fill="#ff0000" />
        <path d="M1491 672l6 0M1494 675l3 0" stroke="#4472c4" strokeWidth="2" />
    </Overlay>
);

export default function App() {
    return (
        <Page>
            <GlobalStyle />
            <TitleBar>
                <TopStripe />
                <Leaves width="620" height="43" viewBox="0 0 620 43">
                    <g fill="#23633f">
                        <ellipse cx="70" cy="24" rx="32" ry="22" />
                        <ellipse cx="150" cy="34" rx="50" ry="18" />
                        <ellipse cx="330" cy="8" rx="40" ry="20" />
                        <ellipse cx="470" cy="30" rx="35" ry="22" />
                        <ellipse cx="590" cy="36" rx="26" ry="14" />
                    </g>
                </Leaves>
                <Qat>
                    <Cell $w={24}>
                        <QSave />
                    </Cell>
                    <Gap $w={4} />
                    <Cell $w={36}>
                        <QUndo />
                    </Cell>
                    <Cell $w={8}>
                        <Chev c="#fff" />
                    </Cell>
                    <Gap $w={5} />
                    <Cell $w={36}>
                        <QRedo />
                    </Cell>
                    <Cell $w={6}>
                        <Chev c="#6aa585" />
                    </Cell>
                    <Cell $w={46}>
                        <Scissors />
                    </Cell>
                    <Cell $w={26}>
                        <QSaveEdit />
                    </Cell>
                    <Cell $w={46}>
                        <QDoc />
                    </Cell>
                    <Cell $w={20}>
                        <QCustom />
                    </Cell>
                </Qat>
                <TitleText>商辅买卖税费  -  Excel</TitleText>
                <TitleRight>
                    <UserName>刘 玲</UserName>
                    <Avatar>
                        <Person />
                    </Avatar>
                    <WinBtn $w={16}>
                        <RibbonDisplay />
                    </WinBtn>
                    <Gap $w={22} />
                    <WinBtn $w={57}>
                        <WinMin />
                    </WinBtn>
                    <WinBtn $w={57}>
                        <WinRestore />
                    </WinBtn>
                    <WinBtn $w={57}>
                        <WinClose />
                    </WinBtn>
                </TitleRight>
            </TitleBar>

            <Ribbon>
                <TabRow>
                    <Tab>文件</Tab>
                    <Tab $active>开始</Tab>
                    {tabs.map((t) => (
                        <Tab key={t}>{t}</Tab>
                    ))}
                    <Tab $green>表设计</Tab>
                    <Search>
                        <Bulb />
                        操作说明搜索
                    </Search>
                    <ShareBtn>
                        <ShareIcon />
                        共享
                    </ShareBtn>
                </TabRow>

                <Groups>
                    <Group $w={159}>
                        <GroupBody $pad={8}>
                            <BigButton w={56} icon={<Paste />} lines={['粘贴']} />
                            <ClipStack>
                                <SmallRow>
                                    <SmallIcon $w={26}>
                                        <Scissors c="#666" h="#4a7fb5" />
                                    </SmallIcon>
                                    剪切
                                </SmallRow>
                                <SmallRow>
                                    <SmallIcon $w={26}>
                                        <Copy />
                                    </SmallIcon>
                                    复制
                                    <SmallChev $ml={8}>
                                        <Chev />
                                    </SmallChev>
                                </SmallRow>
                                <SmallRow>
                                    <SmallIcon $w={26}>
                                        <Painter />
                                    </SmallIcon>
                                    格式刷
                                </SmallRow>
                            </ClipStack>
                        </GroupBody>
                        <Foot label="剪贴板" launch />
                    </Group>

                    <Group $w={344}>
                        <GroupBody $pad={10}>
                            <ComboStack>
                                <Row>
                                    <Combo $w={213}>
                                        等线
                                        <Drop />
                                    </Combo>
                                    <Gap $w={2} />
                                    <Combo $w={49}>
                                        <SizeValue>11</SizeValue>
                                        <Drop />
                                    </Combo>
                                    <Cell $w={35}>
                                        <GrowA up />
                                    </Cell>
                                    <Cell $w={26}>
                                        <GrowA />
                                    </Cell>
                                </Row>
                                <Row>
                                    <Toggle $w={28}>
                                        <FontMark $b>B</FontMark>
                                    </Toggle>
                                    <Cell $w={30}>
                                        <ItalicMark>I</ItalicMark>
                                    </Cell>
                                    <Cell $w={32}>
                                        <FontMark $u>U</FontMark>
                                    </Cell>
                                    <Cell $w={12}>
                                        <Chev />
                                    </Cell>
                                    <Gap $w={9} />
                                    <VSep />
                                    <Cell $w={34}>
                                        <Borders />
                                    </Cell>
                                    <Cell $w={12}>
                                        <Chev />
                                    </Cell>
                                    <Gap $w={10} />
                                    <VSep />
                                    <Cell $w={34}>
                                        <FillColor />
                                    </Cell>
                                    <Cell $w={10}>
                                        <Chev />
                                    </Cell>
                                    <Gap $w={4} />
                                    <Cell $w={36}>
                                        <TextColor />
                                    </Cell>
                                    <Cell $w={8}>
                                        <Chev />
                                    </Cell>
                                    <Gap $w={11} />
                                    <VSep />
                                    <Cell $w={36}>
                                        <Wen />
                                    </Cell>
                                    <Cell $w={8}>
                                        <Chev />
                                    </Cell>
                                </Row>
                            </ComboStack>
                        </GroupBody>
                        <Foot label="字体" launch />
                    </Group>

                    <Group $w={318}>
                        <GroupBody $pad={9}>
                            <ComboStack>
                                <Row>
                                    <Cell $w={28}>
                                        <VAlignIcon y={1} />
                                    </Cell>
                                    <Gap $w={3} />
                                    <Toggle $w={28}>
                                        <VAlignIcon y={6} />
                                    </Toggle>
                                    <Cell $w={32}>
                                        <VAlignIcon y={10} />
                                    </Cell>
                                    <Gap $w={2} />
                                    <VSep />
                                    <Cell $w={34}>
                                        <Orient />
                                    </Cell>
                                    <Cell $w={8}>
                                        <Chev />
                                    </Cell>
                                    <Gap $w={25} />
                                    <VSep />
                                    <Gap $w={6} />
                                    <WrapBtn>
                                        <WrapIcon />
                                        自动换行
                                    </WrapBtn>
                                </Row>
                                <Row>
                                    <Cell $w={28}>
                                        <HAlignIcon a="l" />
                                    </Cell>
                                    <Gap $w={3} />
                                    <Toggle $w={28}>
                                        <HAlignIcon a="c" />
                                    </Toggle>
                                    <Cell $w={32}>
                                        <HAlignIcon a="r" />
                                    </Cell>
                                    <Gap $w={2} />
                                    <VSep />
                                    <Cell $w={36}>
                                        <Indent out />
                                    </Cell>
                                    <Cell $w={22}>
                                        <Indent />
                                    </Cell>
                                    <Gap $w={9} />
                                    <VSep />
                                    <Gap $w={6} />
                                    <MergeBtn>
                                        <MergeIcon />
                                        合并后居中
                                    </MergeBtn>
                                    <Cell $w={18}>
                                        <Chev c="#aaa" />
                                    </Cell>
                                </Row>
                            </ComboStack>
                        </GroupBody>
                        <Foot label="对齐方式" launch />
                    </Group>

                    <Group $w={195}>
                        <GroupBody $pad={10}>
                            <ComboStack>
                                <Row>
                                    <Combo $w={173}>
                                        文本
                                        <Drop />
                                    </Combo>
                                </Row>
                                <Row>
                                    <Cell $w={26}>
                                        <Accounting />
                                    </Cell>
                                    <Cell $w={20}>
                                        <Chev />
                                    </Cell>
                                    <Cell $w={32}>
                                        <FontMark>%</FontMark>
                                    </Cell>
                                    <Cell $w={28}>
                                        <CommaMark>,</CommaMark>
                                    </Cell>
                                    <Gap $w={5} />
                                    <VSep />
                                    <Cell $w={36}>
                                        <Decimal />
                                    </Cell>
                                    <Cell $w={24}>
                                        <Decimal more />
                                    </Cell>
                                </Row>
                            </ComboStack>
                        </GroupBody>
                        <Foot label="数字" launch />
                    </Group>

                    <Group $w={244}>
                        <GroupBody>
                            <BigButton w={82} icon={<CondFormat />} lines={['条件格式']} />
                            <BigButton w={62} icon={<TableFormat />} lines={['套用', '表格格式']} chev="inline" />
                            <BigButton w={96} icon={<CellStyle />} lines={['单元格样式']} />
                        </GroupBody>
                        <Foot label="样式" />
                    </Group>

                    <Group $w={175}>
                        <GroupBody>
                            <BigButton w={68} icon={<InsertIcon />} lines={['插入']} />
                            <BigButton w={38} icon={<DeleteIcon />} lines={['删除']} />
                            <BigButton w={67} icon={<FormatIcon />} lines={['格式']} />
                        </GroupBody>
                        <Foot label="单元格" />
                    </Group>

                    <Group $w={297}>
                        <GroupBody>
                            <EditStack>
                                <SmallRow>
                                    <SmallIcon $w={38} $pl={8}>
                                        <Sigma />
                                    </SmallIcon>
                                    自动求和
                                    <SmallChev $ml={13}>
                                        <Chev />
                                    </SmallChev>
                                </SmallRow>
                                <SmallRow>
                                    <SmallIcon $w={38} $pl={8}>
                                        <FillDown />
                                    </SmallIcon>
                                    填充
                                    <SmallChev $ml={4}>
                                        <Chev />
                                    </SmallChev>
                                </SmallRow>
                                <SmallRow>
                                    <SmallIcon $w={38} $pl={8}>
                                        <Eraser />
                                    </SmallIcon>
                                    清除
                                    <SmallChev $ml={4}>
                                        <Chev />
                                    </SmallChev>
                                </SmallRow>
                            </EditStack>
                            <Gap $w={7} />
                            <BigButton w={78} icon={<SortFilter />} lines={['排序和筛选']} />
                            <BigButton w={84} icon={<Magnifier />} lines={['查找和选择']} />
                        </GroupBody>
                        <Foot label="编辑" />
                    </Group>

                    <Group $w={85}>
                        <GroupBody>
                            <BigButton w={84} icon={<BaiduCloud />} lines={['保存到', '百度网盘']} chev="none" />
                        </GroupBody>
                        <Foot label="保存" />
                    </Group>

                    <Collapse>
                        <ChevUp />
                    </Collapse>
                </Groups>
            </Ribbon>

            <FormulaBar>
                <NameBox>
                    H2
                    <Drop />
                </NameBox>
                <Grip>
                    <GripDots />
                </Grip>
                <FxBox>
                    <Cell $w={44}>
                        <XMark />
                    </Cell>
                    <Cell $w={46}>
                        <CheckMark />
                    </Cell>
                    <Cell $w={40}>
                        <Fx>fx</Fx>
                    </Cell>
                </FxBox>
                <FormulaInput>
                    <FormulaText>{formula}</FormulaText>
                    <Chev c="#777" />
                </FormulaInput>
            </FormulaBar>

            <SheetArea>
                <Grid>
                    <Corner>
                        <CornerMark />
                    </Corner>
                    {columns.map((c) => (
                        <ColHead key={c} $on={c === 'H'} $shift={c === 'J' ? 20 : 0}>
                            {c}
                        </ColHead>
                    ))}

                    <RowHead>1</RowHead>
                    {headers.map((h) => (
                        <HeadCell key={h}>{h}</HeadCell>
                    ))}
                    <Blank />
                    <Blank />

                    <RowHead $on>2</RowHead>
                    {values.map((v) => (
                        <DataCell key={v}>{v}</DataCell>
                    ))}
                    <SelectedCell>
                        {wrapped.map((line) => (
                            <div key={line}>{line}</div>
                        ))}
                        <FillHandle />
                    </SelectedCell>
                    <Blank />
                    <Blank />

                    {[3, 4, 5, 6].map((r) => (
                        <React.Fragment key={r}>
                            <RowHead>{r < 6 ? r : ''}</RowHead>
                            {columns.map((c) => (
                                <Blank key={c} />
                            ))}
                        </React.Fragment>
                    ))}
                </Grid>
                <VScroll>
                    <ScrollBtn>
                        <Tri d="u" />
                    </ScrollBtn>
                    <VThumb />
                    <VLane />
                    <ScrollBtn>
                        <Tri d="d" />
                    </ScrollBtn>
                </VScroll>
            </SheetArea>

            <TabBar>
                <NavArrows>
                    <Tri d="l" c="#bbb" />
                    <Tri d="r" c="#bbb" />
                </NavArrows>
                <SheetTab>Sheet1</SheetTab>
                <AddSheet>
                    <PlusCircle />
                </AddSheet>
                <HScroll>
                    <Dots>
                        <HDots />
                    </Dots>
                    <HBtn>
                        <Tri d="l" c="#555" />
                    </HBtn>
                    <HThumb />
                    <HLane />
                    <HBtn>
                        <Tri d="r" c="#555" />
                    </HBtn>
                </HScroll>
            </TabBar>

            <StatusBar>
                <StatusText>就绪</StatusText>
                <Gap $w={20} />
                <MacroIcon />
                <Gap $w={21} />
                <Access />
                <Gap $w={4} />
                辅助功能: 调查
                <StatusRight>
                    <ViewBtn $on>
                        <NormalView />
                    </ViewBtn>
                    <ViewBtn>
                        <PageView />
                    </ViewBtn>
                    <ViewBtn>
                        <BreakView />
                    </ViewBtn>
                    <Gap $w={9} />
                    <PlusMinus>−</PlusMinus>
                    <ZoomTrack>
                        <ZoomThumb />
                    </ZoomTrack>
                    <PlusMinus>+</PlusMinus>
                    <Gap $w={17} />
                    <ZoomValue>115%</ZoomValue>
                </StatusRight>
            </StatusBar>
            <GreenStrip>
                <StripPatch />
            </GreenStrip>

            <RedFrame />
            <Arrow />
            <Thermo>
                <ThermoFill />
            </Thermo>
            <Watermark />
        </Page>
    );
}
